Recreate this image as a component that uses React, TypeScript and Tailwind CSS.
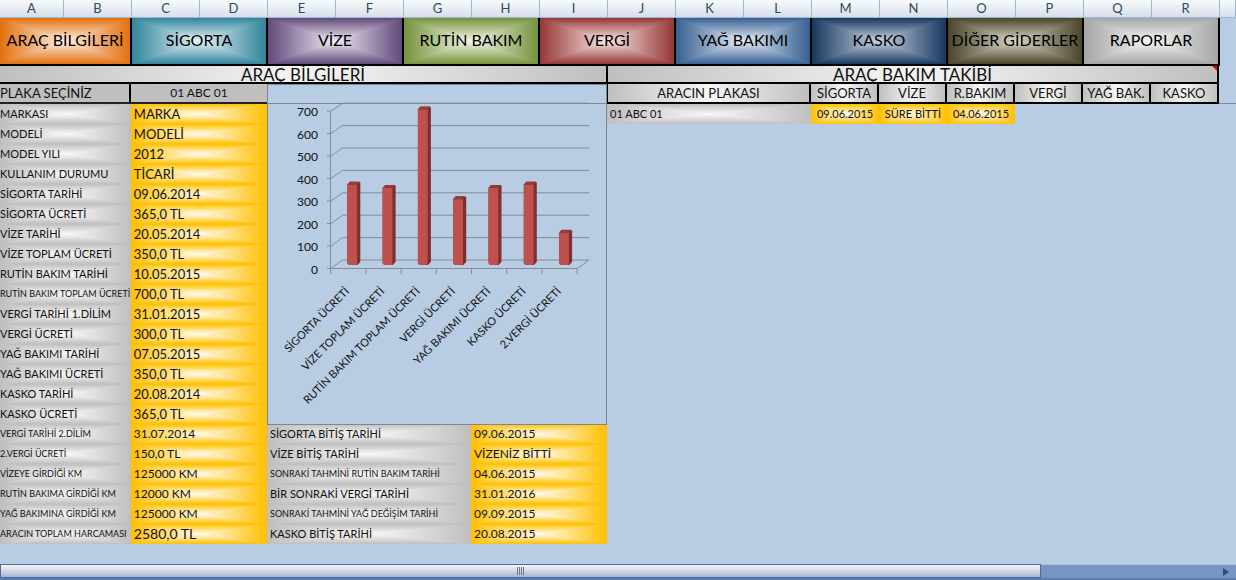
import React from "react";

const COLUMNS = "ABCDEFGHIJKLMNOPQR".split("");

const TABS = [
  { label: "ARAÇ BİLGİLERİ", fill: "bg-[linear-gradient(90deg,#e3700f,#fdf0e6,#e3700f),linear-gradient(180deg,#e3700f,#fdf0e6,#e3700f)]" },
  { label: "SİGORTA", fill: "bg-[linear-gradient(90deg,#31859c,#e6f2f5,#31859c),linear-gradient(180deg,#31859c,#e6f2f5,#31859c)]" },
  { label: "VİZE", fill: "bg-[linear-gradient(90deg,#604a7b,#f0eaf4,#604a7b),linear-gradient(180deg,#604a7b,#f0eaf4,#604a7b)]" },
  { label: "RUTİN BAKIM", fill: "bg-[linear-gradient(90deg,#77933c,#f2f6e8,#77933c),linear-gradient(180deg,#77933c,#f2f6e8,#77933c)]" },
  { label: "VERGİ", fill: "bg-[linear-gradient(90deg,#953735,#f8e8e8,#953735),linear-gradient(180deg,#953735,#f8e8e8,#953735)]" },
  { label: "YAĞ BAKIMI", fill: "bg-[linear-gradient(90deg,#376092,#e6edf6,#376092),linear-gradient(180deg,#376092,#e6edf6,#376092)]" },
  { label: "KASKO", fill: "bg-[linear-gradient(90deg,#17375e,#c9d4e2,#17375e),linear-gradient(180deg,#17375e,#c9d4e2,#17375e)]" },
  { label: "DİĞER GİDERLER", fill: "bg-[linear-gradient(90deg,#4a452a,#d8d5c8,#4a452a),linear-gradient(180deg,#4a452a,#d8d5c8,#4a452a)]" },
  { label: "RAPORLAR", fill: "bg-[linear-gradient(90deg,#a6a6a6,#f5f5f5,#a6a6a6),linear-gradient(180deg,#a6a6a6,#f5f5f5,#a6a6a6)]" },
];

const GREY =
  "bg-[linear-gradient(90deg,#bfbfbf,#f8f8f8,#bfbfbf),linear-gradient(180deg,#bfbfbf,#f8f8f8,#bfbfbf)] bg-blend-darken";
const GOLD =
  "bg-[linear-gradient(90deg,#ffc000,#fffbee,#ffc000),linear-gradient(180deg,#ffc000,#fffbee,#ffc000)] bg-blend-darken";
const BAR = "bg-[linear-gradient(90deg,#bfbfbf,#f5f5f5,#bfbfbf)]";

type Row = { label: string; value: string; size?: "small" | "late" | "total" };

const VEHICLE: Row[] = [
  { label: "MARKASI", value: "MARKA" },
  { label: "MODELİ", value: "MODELİ" },
  { label: "MODEL YILI", value: "2012" },
  { label: "KULLANIM DURUMU", value: "TİCARİ" },
  { label: "SİGORTA TARİHİ", value: "09.06.2014" },
  { label: "SİGORTA ÜCRETİ", value: "365,0 TL" },
  { label: "VİZE TARİHİ", value: "20.05.2014" },
  { label: "VİZE TOPLAM ÜCRETİ", value: "350,0 TL" },
  { label: "RUTİN BAKIM TARİHİ", value: "10.05.2015" },
  { label: "RUTİN BAKIM TOPLAM ÜCRETİ", value: "700,0 TL", size: "small" },
  { label: "VERGİ TARİHİ 1.DİLİM", value: "31.01.2015" },
  { label: "VERGİ ÜCRETİ", value: "300,0 TL" },
  { label: "YAĞ BAKIMI TARİHİ", value: "07.05.2015" },
  { label: "YAĞ BAKIMI ÜCRETİ", value: "350,0 TL" },
  { label: "KASKO TARİHİ", value: "20.08.2014" },
  { label: "KASKO ÜCRETİ", value: "365,0 TL" },
  { label: "VERGİ TARİHİ 2.DİLİM", value: "31.07.2014", size: "late" },
  { label: "2.VERGİ ÜCRETİ", value: "150,0 TL", size: "late" },
  { label: "VİZEYE GİRDİĞİ KM", value: "125000 KM", size: "late" },
  { label: "RUTİN BAKIMA GİRDİĞİ KM", value: "12000 KM", size: "late" },
  { label: "YAĞ BAKIMINA GİRDİĞİ KM", value: "125000 KM", size: "late" },
  { label: "ARACIN TOPLAM HARCAMASI", value: "2580,0 TL", size: "total" },
];

const DEADLINES: Row[] = [
  { label: "SİGORTA BİTİŞ TARİHİ", value: "09.06.2015" },
  { label: "VİZE BİTİŞ TARİHİ", value: "VİZENİZ BİTTİ" },
  { label: "SONRAKİ TAHMİNİ RUTİN BAKIM TARİHİ", value: "04.06.2015", size: "late" },
  { label: "BİR SONRAKİ VERGİ TARİHİ", value: "31.01.2016" },
  { label: "SONRAKİ TAHMİNİ YAĞ DEĞİŞİM TARİHİ", value: "09.09.2015", size: "late" },
  { label: "KASKO BİTİŞ TARİHİ", value: "20.08.2015" },
];

const TRACKING_HEADS = ["SİGORTA", "VİZE", "R.BAKIM", "VERGİ", "YAĞ BAK.", "KASKO"];
const TRACKING_VALUES = ["09.06.2015", "SÜRE BİTTİ", "04.06.2015"];

const COSTS = [
  { name: "SİGORTA ÜCRETİ", amount: 365 },
  { name: "VİZE TOPLAM ÜCRETİ", amount: 350 },
  { name: "RUTİN BAKIM TOPLAM ÜCRETİ", amount: 700 },
  { name: "VERGİ ÜCRETİ", amount: 300 },
  { name: "YAĞ BAKIMI ÜCRETİ", amount: 350 },
  { name: "KASKO ÜCRETİ", amount: 365 },
  { name: "2.VERGİ ÜCRETİ", amount: 150 },
];

function CostChart() {
  const step = 35.3;
  return (
    <svg viewBox="1 1 338 339" className="block h-[339px] w-full" role="img" aria-label="Ücretler">
      <path d="M-400 19.5H740" stroke="#7f868f" />
      {[0, 1, 2, 3, 4, 5, 6, 7].map((n) => {
        const front = 184.5 - n * 22.5;
        const back = 176 - n * 22.4;
        return (
          <g key={n}>
            <path d={`M60 ${front}H64L75.5 ${back}H322`} fill="none" stroke="#868c94" />
            <text x="51" y={front + 5} textAnchor="end" fontSize="12" fill="#111">
              {n * 100}
            </text>
          </g>
        );
      })}
      <path d="M63.5 27V184.5H310.5L322 176" fill="none" stroke="#868c94" />
      {[0, 1, 2, 3, 4, 5, 6, 7].map((n) => (
        <path key={n} d={`M${63.7 + n * 35.2} 184.5v5.5`} stroke="#868c94" />
      ))}
      {COSTS.map((cost, i) => {
        const x = 80.3 + i * step;
        const top = 181.5 - cost.amount * 0.2243;
        return (
          <g key={cost.name}>
            <path d={`M${x} ${top + 1}l2.5-3h9.5l1 1.2V178l-3 3H${x + 1.5}L${x} 179z`} fill="#7d2f2e" />
            <path d={`M${x} ${top + 0.8}l2.5-2.6h9.5l-2 2.6z`} fill="#963b39" />
            <path d={`M${x} ${top + 1}h9.8V179l-1.2 2h-7L${x} 179z`} fill="#c0504d" />
            <text
              x={83 + i * step}
              y={208}
              textAnchor="end"
              fontSize="11"
              fill="#111"
              transform={`rotate(-45 ${83 + i * step} 208)`}
            >
              {cost.name}
            </text>
          </g>
        );
      })}
    </svg>
  );
}

function RecordTable({ rows, main, label }: { rows: Row[]; main?: boolean; label: string }) {
  return (
    <table aria-label={label} className="w-full table-fixed border-collapse">
      <colgroup>
        <col className={main ? "w-[49%]" : "w-[60%]"} />
        <col />
      </colgroup>
      <tbody>
        {rows.map((row) => (
          <tr key={row.label} className="h-5">
            <th
              scope="row"
              className={`${GREY} p-0 text-left leading-5 font-normal whitespace-nowrap ${
                main ? "" : "pl-[3px]"
              } ${row.size ? "text-[9px]" : "text-[11px]"}`}
            >
              {row.label}
            </th>
            <td
              className={`${GOLD} p-0 pl-[3px] leading-5 whitespace-nowrap ${
                row.size === "total" ? "text-[14px]" : main && row.size !== "late" ? "text-[13px]" : "text-[12px]"
              }`}
            >
              {row.value}
            </td>
          </tr>
        ))}
      </tbody>
    </table>
  );
}

export default function App() {
  return (
    <div className="flex min-h-screen flex-col overflow-hidden bg-[#b8cce4] font-[Lato,'Liberation_Sans',sans-serif] text-[#111]">
      <div className="grid h-[18px] grid-cols-[64fr_repeat(17,68fr)_16fr] border-b border-[#9eb6ce] bg-linear-to-b from-[#f8fafc] to-[#d6dfea] text-center text-[13px] leading-[17px] text-[#33475f]">
        {COLUMNS.map((name) => (
          <div key={name} className="border-r border-[#9eb6ce]">
            {name}
          </div>
        ))}
        <div className="border-r border-[#9eb6ce]" />
      </div>

      <nav className="grid h-12 grid-cols-[132fr_repeat(8,136fr)_16fr]">
        {TABS.map((tab) => (
          <button
            key={tab.label}
            type="button"
            className={`${tab.fill} border-r-2 border-b-2 border-black pb-0.5 font-['Comic_Sans_MS',Lato,sans-serif] text-[16px] whitespace-nowrap text-black bg-blend-darken`}
          >
            {tab.label}
          </button>
        ))}
      </nav>

      <main className="grid grid-cols-[607fr_612fr_17fr]">
        <section>
          <h2 className={`${BAR} h-[18px] border-r border-b-2 border-black text-center text-[17px] leading-[18px]`}>
            ARAÇ BİLGİLERİ
          </h2>
          <div className="grid grid-cols-[267fr_340fr]">
            <div>
              <div className="grid h-5 grid-cols-[131fr_136fr] border-b-2 border-[#222] bg-[#bfbfbf] text-[13px] leading-[18px]">
                <label htmlFor="plate" className="border-r-2 border-black">
                  PLAKA SEÇİNİZ
                </label>
                <select
                  id="plate"
                  className="w-full appearance-none bg-transparent p-0 text-center text-[12px] [text-align-last:center]"
                >
                  <option>01 ABC 01</option>
                </select>
              </div>
              <RecordTable rows={VEHICLE} main label="Araç bilgileri" />
            </div>
            <div>
              <div className="relative z-10 overflow-hidden border border-[#7f868f]">
                <CostChart />
              </div>
              <div className="-mt-px">
                <RecordTable rows={DEADLINES} label="Bitiş tarihleri" />
              </div>
            </div>
          </div>
        </section>

        <section>
          <h2
            className={`${BAR} relative h-[18px] border-r-2 border-b-2 border-l border-black text-center text-[17px] leading-[18px]`}
          >
            ARAÇ BAKIM TAKİBİ
            <svg viewBox="0 0 5 5" className="absolute top-0 right-0 size-[5px]" aria-hidden="true">
              <path d="M0 0h5v5z" fill="#f00" />
            </svg>
          </h2>
          <table aria-label="Araç bakım takibi" className="w-full table-fixed border-separate border-spacing-0">
            <colgroup>
              <col className="w-1/3" />
              <col span={6} className="w-1/9" />
            </colgroup>
            <thead>
              <tr className="h-5 text-[13px] leading-[18px]">
                <th className={`${BAR} border-r-2 border-b-2 border-l border-black p-0 font-normal`}>ARACIN PLAKASI</th>
                {TRACKING_HEADS.map((head) => (
                  <th key={head} className={`${BAR} border-r-2 border-b-2 border-black p-0 font-normal whitespace-nowrap`}>
                    {head}
                  </th>
                ))}
              </tr>
            </thead>
            <tbody>
              <tr className="h-5 text-[11px] leading-5">
                <td className={`${GREY} p-0 pl-[3px]`}>01 ABC 01</td>
                {TRACKING_VALUES.map((value) => (
                  <td key={value} className={`${GOLD} p-0 text-center whitespace-nowrap`}>
                    {value}
                  </td>
                ))}
                <td colSpan={3} />
              </tr>
            </tbody>
          </table>
        </section>
        <div className="h-[38px] border-b border-[#7f868f]" />
      </main>

      <div className="mt-auto grid h-4 grid-cols-[1041fr_195fr] border-b-2 border-[#5b7bab] bg-[#7795c0]">
        <div className="flex items-center justify-center gap-px border border-[#4f6c9c] bg-linear-to-b from-[#f5f7f9] via-[#cfd7e4] to-[#a5b4cf]">
          <i className="h-2 w-px bg-[#6c7a90]" />
          <i className="h-2 w-px bg-[#6c7a90]" />
          <i className="h-2 w-px bg-[#6c7a90]" />
          <i className="h-2 w-px bg-[#6c7a90]" />
        </div>
        <div className="flex items-center justify-end border-t border-[#a6c4ea] pr-[7px]">
          <svg viewBox="0 0 6 8" className="h-2 w-1.5" aria-hidden="true">
            <path d="M0 0l6 4-6 4z" fill="#2f4a7a" />
          </svg>
        </div>
      </div>
    </div>
  );
}
